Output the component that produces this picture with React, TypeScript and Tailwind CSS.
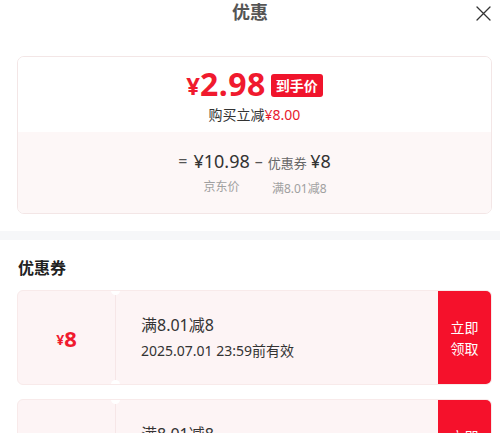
import React from "react";

const font = { fontFamily: '"Noto Sans", "Noto Sans CJK SC", sans-serif' };

function Coupon() {
  return (
    <div className="relative ml-[17px] mr-[8px] h-[95px] flex rounded-[6px] overflow-hidden border border-[#f8eaea] bg-[#fdf4f5]">
      <div className="w-[97px] flex items-center justify-center text-[#f01a2e] font-bold">
        <span className="text-[14px] mt-[4px]">¥</span>
        <span className="text-[22px] leading-none">8</span>
      </div>
      <div className="relative w-px bg-[#f6e6e7]">
        <div className="absolute -top-[5px] -left-[4px] w-[9px] h-[9px] rounded-full bg-white" />
        <div className="absolute -bottom-[5px] -left-[4px] w-[9px] h-[9px] rounded-full bg-white" />
      </div>
      <div className="flex-1 flex flex-col justify-center pl-[25px] text-[#333] gap-[5px]">
        <div className="text-[16px] leading-[22px]">满8.01减8</div>
        <div className="text-[14px] leading-[20px]">2025.07.01 23:59前有效</div>
      </div>
      <div className="w-[53px] bg-[#f5112b] text-white text-[14px] leading-[21px] flex flex-col items-center justify-center">
        <span>立即</span>
        <span>领取</span>
      </div>
    </div>
  );
}

export default function App() {
  return (
    <div className="w-[500px] h-[433px] overflow-hidden bg-white" style={font}>
      <div className="relative h-[26px] flex items-center justify-center">
        <span className="text-[18px] font-bold text-[#555] leading-none mt-[-2px]">优惠</span>
        <svg className="absolute right-[9px] top-[6px]" width="15" height="15" viewBox="0 0 15 15">
          <path d="M1 1 L14 14 M14 1 L1 14" stroke="#333" strokeWidth="1.3" strokeLinecap="round" />
        </svg>
      </div>
      <div className="mt-[30px] ml-[17px] mr-[8px] h-[158px] rounded-[7px] border border-[#f3e6e6] overflow-hidden flex flex-col">
        <div className="h-[75px] bg-white flex flex-col items-center pt-[11px]">
          <div className="flex items-center text-[#f01a2e] font-bold">
            <span className="text-[24px] leading-none mt-[3px]">¥</span>
            <span className="text-[32px] leading-none tracking-[0.5px]">2.98</span>
            <span className="ml-[5px] bg-[#f0142c] text-white text-[14px] leading-[23px] px-[5px] rounded-[3px] mt-[2px]">到手价</span>
          </div>
          <div className="mt-[6px] text-[14px] leading-[18px] text-[#333]">
            购买立减<span className="text-[#e8192c]">¥8.00</span>
          </div>
        </div>
        <div className="flex-1 bg-[#fdf7f7] flex justify-center pt-[17px]">
          <div className="flex items-start text-[#333]">
            <span className="text-[16px] leading-[24px] text-[#555] mr-[6px]">=</span>
            <div className="flex flex-col items-center">
              <span className="text-[18px] leading-[24px]">¥10.98</span>
              <span className="text-[12px] leading-[16px] text-[#a0a0a0] mt-[6px]">京东价</span>
            </div>
            <span className="text-[16px] leading-[24px] text-[#555] mx-[5px]">–</span>
            <div className="flex flex-col items-center">
              <span className="leading-[24px]">
                <span className="text-[13px] text-[#666]">优惠券 </span>
                <span className="text-[18px]">¥8</span>
              </span>
              <span className="text-[12px] leading-[16px] text-[#a0a0a0] mt-[6px]">满8.01减8</span>
            </div>
          </div>
        </div>
      </div>
      <div className="mt-[17px] h-[9px] bg-[#f6f7f9]" />
      <div className="ml-[18px] mt-[16px] h-[24px] text-[16px] leading-[24px] font-bold text-[#222]">优惠券</div>
      <div className="mt-[10px] flex flex-col gap-[14px]">
        <Coupon />
        <Coupon />
      </div>
    </div>
  );
}
